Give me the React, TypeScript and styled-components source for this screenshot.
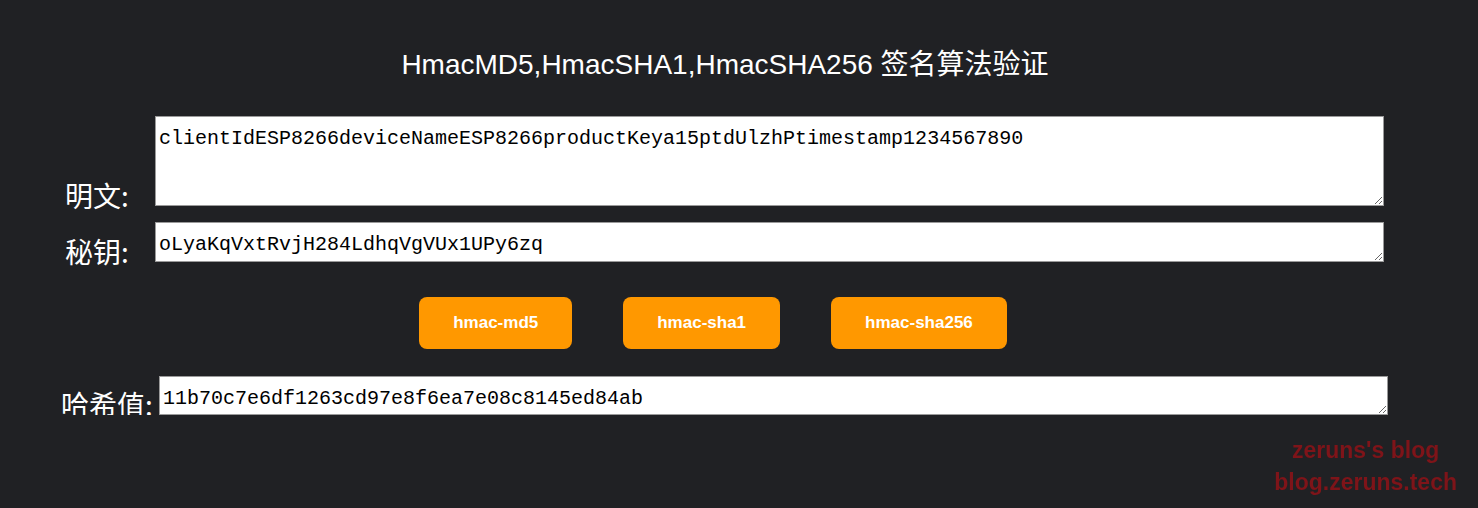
import styled, { createGlobalStyle } from "styled-components";
import { useState } from "react";

const GlobalStyle = createGlobalStyle`
  html, body {
    margin: 0;
    padding: 0;
    background-color: #202124;
  }
  body {
    font-family: "Liberation Sans", "Noto Sans CJK SC", sans-serif;
    color: #fff;
  }
`;

const App: React.FC = () => {
  const [plain, setPlain] = useState<string>(
    "clientIdESP8266deviceNameESP8266productKeya15ptdUlzhPtimestamp1234567890"
  );
  const [secret, setSecret] = useState<string>("oLyaKqVxtRvjH284LdhqVgVUx1UPy6zq");
  const [hash, setHash] = useState<string>("11b70c7e6df1263cd97e8f6ea7e08c8145ed84ab");

  return (
    <>
      <GlobalStyle />
      <Page>
        <Title>HmacMD5,HmacSHA1,HmacSHA256 签名算法验证</Title>
        <Row $indent={65} $gap={16}>
          <Label $width={90}>明文:</Label>
          <Field $height={90} value={plain} onChange={(e) => setPlain(e.target.value)} />
        </Row>
        <Row $indent={65} $gap={0}>
          <Label $width={90}>秘钥:</Label>
          <Field $height={40} value={secret} onChange={(e) => setSecret(e.target.value)} />
        </Row>
        <ButtonRow>
          <HmacButton>hmac-md5</HmacButton>
          <HmacButton>hmac-sha1</HmacButton>
          <HmacButton onClick={() => setHash(hash)}>hmac-sha256</HmacButton>
        </ButtonRow>
        <Row $indent={61} $gap={0}>
          <Label $width={98}>哈希值:</Label>
          <Field $height={39} value={hash} onChange={(e) => setHash(e.target.value)} />
        </Row>
      </Page>
      <Watermark>
        <div>zeruns's blog</div>
        <div>blog.zeruns.tech</div>
      </Watermark>
    </>
  );
};

const Page = styled.div`
  display: flex;
  flex-direction: column;
  padding-top: 45px;
`;

const Title = styled.h1`
  margin: 0 0 31px;
  padding-right: 28px;
  text-align: center;
  font-size: 28px;
  font-weight: 400;
  line-height: 40px;
`;

const Row = styled.div<{ $indent: number; $gap: number }>`
  display: flex;
  align-items: flex-end;
  padding-left: ${(p) => p.$indent}px;
  margin-bottom: ${(p) => p.$gap}px;
`;

const Label = styled.span<{ $width: number }>`
  flex: none;
  width: ${(p) => p.$width}px;
  font-family: "Noto Sans CJK SC", sans-serif;
  font-size: 28px;
  line-height: 1;
  margin-bottom: -3px;
  white-space: nowrap;
`;

const Field = styled.textarea<{ $height: number }>`
  box-sizing: border-box;
  width: 1229px;
  height: ${(p) => p.$height}px;
  margin: 0;
  padding: 10px 3px 2px 3px;
  border: 1px solid #9a9a9a;
  background: #fff;
  color: #000;
  font-family: "Liberation Mono", monospace;
  font-size: 20px;
  outline: none;
`;

const ButtonRow = styled.div`
  display: flex;
  justify-content: center;
  gap: 51px;
  padding-right: 52px;
  margin: 35px 0 27px;
`;

const HmacButton = styled.button`
  height: 52px;
  padding: 0 34px;
  border: none;
  border-radius: 8px;
  background-color: #ff9800;
  color: #fff;
  font-family: "Liberation Sans", sans-serif;
  font-size: 17px;
  font-weight: 700;
  cursor: pointer;
`;

const Watermark = styled.div`
  position: fixed;
  right: 21px;
  bottom: 10px;
  text-align: center;
  color: #7e1419;
  font-family: "Liberation Sans", sans-serif;
  font-size: 23px;
  font-weight: 700;
  line-height: 32px;
  pointer-events: none;
`;

export default App;
